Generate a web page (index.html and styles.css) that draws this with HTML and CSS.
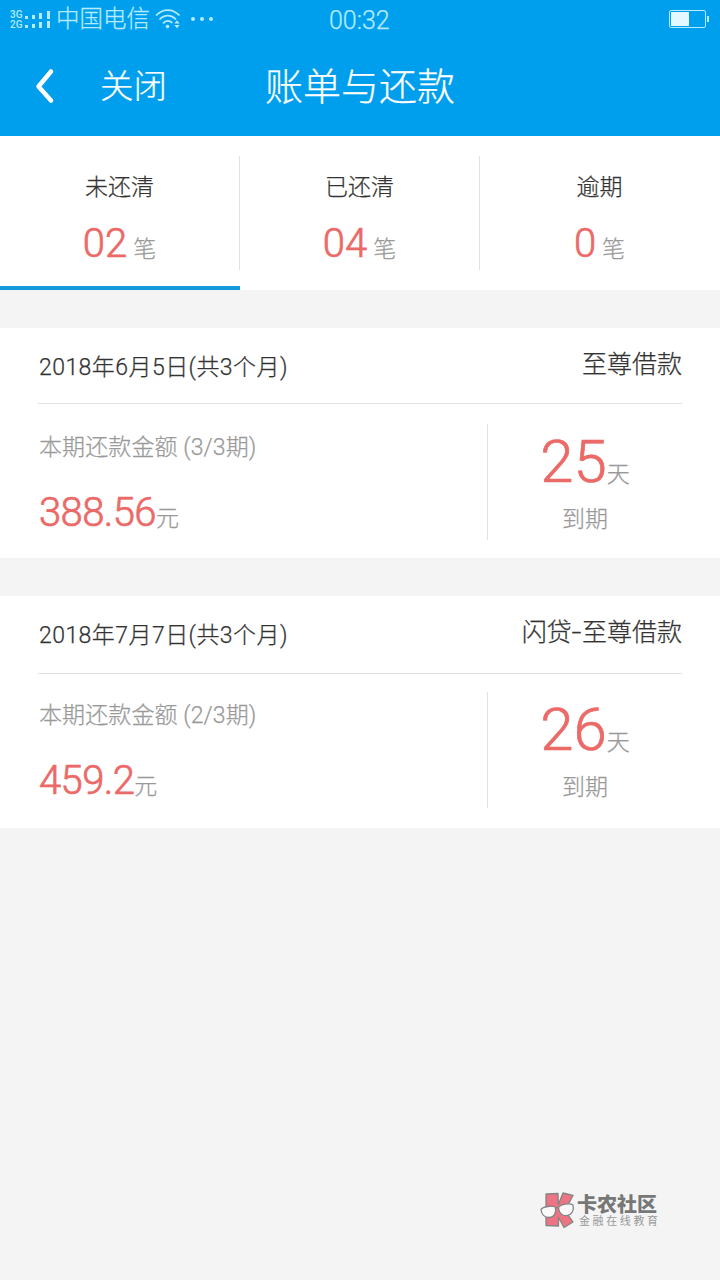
FILE: index.html
```
<!DOCTYPE html>
<html lang="zh-CN">
<head>
    <meta charset="UTF-8">
    <meta name="viewport" content="width=device-width, initial-scale=1.0">
    <title>账单与还款</title>
    <link rel="stylesheet" href="styles.css">
</head>
<body>
    <header class="header">
        <div class="status-bar">
            <div class="network">
                <div class="network-type"><span>3G</span><span>2G</span></div>
                <svg class="signal" width="26" height="20" viewBox="0 0 26 20" fill="currentColor">
                    <path d="M0 5h3v3H0zM7 4h3v4H7zM14 2h3v6h-3zM22 0h3v8h-3zM0 14h3v3H0zM7 13h3v4H7zM14 11h3v6h-3zM22 10h3v7h-3z"/>
                </svg>
                <span class="carrier">中国电信</span>
                <svg class="wifi" width="26" height="22" viewBox="0 0 26 22" fill="none" stroke="currentColor" stroke-width="1.8">
                    <path d="M1 7.500C8 .2 17.500 .2 24.500 7.500M4.500 11.500c5-5.200 11.500-5.200 16.500 0M8 15.300c3-3.200 6.500-3.200 9.300-.4"/>
                    <circle cx="12.500" cy="18.500" r="1.800" fill="currentColor" stroke="none"/>
                    <path d="M19.300 15.500h5.400L22 12.200zM19.300 17h5.400L22 20.300z" fill="currentColor" stroke="none"/>
                </svg>
                <svg class="dots" width="24" height="6" viewBox="0 0 24 6" fill="currentColor">
                    <circle cx="3" cy="3" r="2"/><circle cx="12" cy="3" r="2"/><circle cx="21" cy="3" r="2"/>
                </svg>
            </div>
            <span class="clock">00:32</span>
            <svg class="battery" width="41" height="19" viewBox="0 0 41 19">
                <rect x=".5" y=".5" width="36" height="17" rx="1.500" fill="none" stroke="#b5ebff"/>
                <rect x="2" y="2" width="18" height="14" fill="#e5f7ff"/>
                <rect x="38" y="6" width="2" height="6" fill="#b5ebff"/>
            </svg>
        </div>
        <nav class="nav-bar">
            <svg class="back" width="20" height="36" viewBox="0 0 20 36" fill="none" stroke="#fff" stroke-width="4.500" stroke-linecap="round" stroke-linejoin="round">
                <path d="M16 3.500L3.500 18.500l12.500 14"/>
            </svg>
            <span class="close">关闭</span>
            <h1 class="title">账单与还款</h1>
        </nav>
    </header>

    <section class="tabs">
        <div class="tab active">
            <div class="tab-inner">
                <div class="tab-name">未还清</div>
                <div class="tab-count"><b>02</b>笔</div>
            </div>
        </div>
        <div class="tab">
            <div class="tab-inner">
                <div class="tab-name">已还清</div>
                <div class="tab-count"><b>04</b>笔</div>
            </div>
        </div>
        <div class="tab">
            <div class="tab-inner">
                <div class="tab-name">逾期</div>
                <div class="tab-count"><b>0</b>笔</div>
            </div>
        </div>
    </section>

    <main class="bills">
        <article class="card">
            <div class="card-head">
                <span class="date">2018年6月5日(共3个月)</span>
                <span class="product">至尊借款</span>
            </div>
            <div class="card-body">
                <div class="payment">
                    <div class="label">本期还款金额 (3/3期)</div>
                    <div class="amount"><b>388.56</b>元</div>
                </div>
                <div class="due">
                    <div class="days"><b>25</b>天</div>
                    <div class="due-label">到期</div>
                </div>
            </div>
        </article>
        <article class="card card-tall">
            <div class="card-head">
                <span class="date">2018年7月7日(共3个月)</span>
                <span class="product">闪贷<i class="dash">-</i>至尊借款</span>
            </div>
            <div class="card-body">
                <div class="payment">
                    <div class="label">本期还款金额 (2/3期)</div>
                    <div class="amount"><b>459.2</b>元</div>
                </div>
                <div class="due">
                    <div class="days"><b>26</b>天</div>
                    <div class="due-label">到期</div>
                </div>
            </div>
        </article>
    </main>

    <footer class="brand">
        <svg class="brand-logo" width="35" height="38" viewBox="0 0 35 38" stroke="#858585" stroke-width="1.300" stroke-linejoin="round">
            <path d="M6 3l12-.5.3 11L23 2l10 2.500-8 15L33 31l-9 5.500-5.500-10V35l-12.500-.5z" fill="#ed7482"/>
            <path d="M1 18.500c2-2.800 11-4.500 14.500-2.200 1 6-1.500 10-6.500 10.200-5 0-7.500-4-8-8zM18.500 16.500c2-3 11-5 14.500-2.500 1.300 5-1 10-6.500 10.700-5 .3-7.500-3.700-8-8.200z" fill="#fafafa"/>
            <path d="M15.500 17l3-.5" fill="none"/>
        </svg>
        <div class="brand-text">
            <div class="brand-name">卡农社区</div>
            <div class="brand-slogan">金融在线教育</div>
        </div>
    </footer>
</body>
</html>
```
FILE: styles.css
```
:root {
    --blue: #009fee;
    --line-blue: #1699dc;
    --red: #eb6a68;
    --bg-color: #f4f4f4;
    --text-color: #333;
    --muted: #999;
    --border-color: #e2e2e2;
}

* {
    box-sizing: border-box;
}

body {
    margin: 0;
    min-height: 1280px;
    display: flex;
    flex-direction: column;
    background-color: var(--bg-color);
    color: var(--text-color);
    font-family: Roboto, "Noto Sans CJK SC", sans-serif;
    font-weight: 300;
    font-size: 23px;
    line-height: 30px;
    white-space: nowrap;
    -webkit-text-stroke: 0.25px;
}

b {
    font-weight: 300;
    color: var(--red);
    -webkit-text-stroke: 0.7px;
}

svg {
    display: block;
    flex: none;
}

/* Header */
.header {
    height: 136px;
    background: var(--blue);
    color: #fff;
}

.status-bar {
    height: 38px;
    padding: 0 11px 0 10px;
    display: grid;
    grid-template-columns: 319px 1fr auto;
    align-items: center;
    color: #b5ebff;
}

.network {
    display: flex;
    align-items: center;
}

.network-type {
    display: flex;
    flex-direction: column;
    width: 15px;
    font-size: 10px;
    font-weight: 500;
    line-height: 10px;
    margin-top: -1px;
    -webkit-text-stroke: 0;
}

.signal {
    margin-top: 1px;
}

.carrier {
    margin-left: 5px;
    width: 96px;
    font-size: 23.5px;
    line-height: 34px;
    padding-bottom: 2px;
}

.wifi {
    margin: -2px 0 0 3px;
}

.dots {
    margin: -3px 0 0 9px;
}

.clock {
    font-size: 25px;
    line-height: 38px;
    padding-top: 2px;
}

.battery {
    margin: -2px -1px 0 0;
}

.nav-bar {
    height: 98px;
    padding-left: 35px;
    display: flex;
    align-items: center;
}

.back {
    margin-top: -2px;
}

.close {
    margin-left: 45px;
    width: 165px;
    font-size: 33.5px;
    line-height: 48px;
}

.title {
    margin: 0;
    font-size: 38px;
    font-weight: 300;
    line-height: 54px;
}

/* Tabs */
.tabs {
    height: 154px;
    display: grid;
    grid-template-columns: repeat(3, 1fr);
    background: #fff;
}

.tab {
    padding-top: 20px;
    text-align: center;
}

.tab.active {
    border-bottom: 4px solid var(--line-blue);
}

.tab-inner {
    height: 114px;
    padding-top: 17px;
    border-right: 1px solid var(--border-color);
}

.tab:last-child .tab-inner {
    border-right-color: transparent;
}

.tab-count {
    margin-top: 17px;
    line-height: 48px;
    color: var(--muted);
}

.tab-count b {
    margin-right: 6px;
    font-size: 40px;
}

/* Bills */
.bills {
    flex: 1;
}

.card {
    height: 230px;
    margin-top: 38px;
    padding: 0 38px;
    background: #fff;
}

.card-tall {
    height: 232px;
}

.card-head {
    height: 76px;
    padding-top: 22px;
    display: flex;
    justify-content: space-between;
    border-bottom: 1px solid var(--border-color);
}

.card-tall .card-head {
    height: 78px;
}

.date {
    padding: 3px 0 0 1px;
    letter-spacing: 0.45px;
}

.product {
    font-size: 25px;
}

.dash {
    display: inline-block;
    font-style: normal;
    transform: scaleX(1.4);
    margin: 0 2px 0 1px;
}

.card-body {
    padding-top: 20px;
    display: grid;
    grid-template-columns: 449px 1fr;
}

.card-tall .card-body {
    padding-top: 18px;
}

.payment {
    padding: 9px 0 0 1px;
    color: var(--muted);
}

.label {
    letter-spacing: 0.1px;
}

.amount {
    margin-top: 26px;
    line-height: 48px;
}

.amount b {
    font-size: 40px;
    letter-spacing: -0.6px;
}

.due {
    height: 116px;
    padding-top: 8px;
    border-left: 1px solid var(--border-color);
    text-align: center;
    color: var(--muted);
}

.days {
    height: 60px;
    line-height: 60px;
}

.days b {
    font-size: 60px;
}

.due-label {
    margin-top: 13px;
}

/* Brand mark */
.brand {
    margin: 0 61px 51px 0;
    display: flex;
    justify-content: flex-end;
    align-items: center;
    color: #777;
    -webkit-text-stroke: 0;
}

.brand-text {
    width: 82px;
    margin-left: 2px;
    padding-top: 1px;
}

.brand-name {
    font-size: 20px;
    font-weight: 900;
    line-height: 22px;
}

.brand-slogan {
    font-size: 11px;
    font-weight: 400;
    letter-spacing: 2.6px;
    line-height: 12px;
    color: #999;
    padding-left: 2px;
}
```
